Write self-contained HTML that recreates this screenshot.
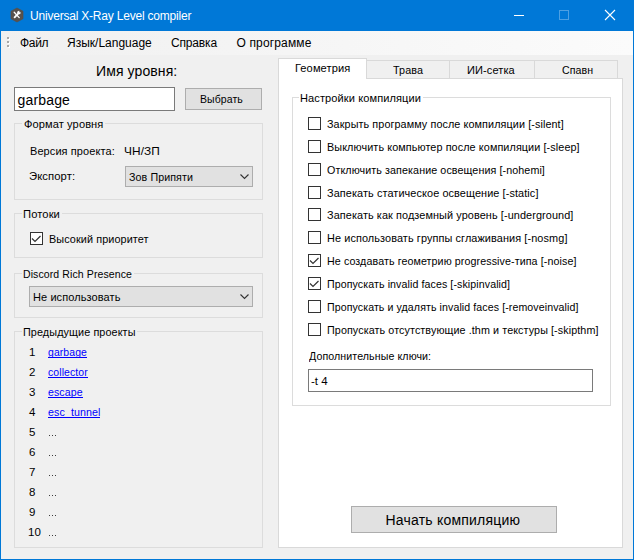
<!DOCTYPE html><html><head><meta charset='utf-8'><style>
html,body{margin:0;padding:0;width:634px;height:560px;overflow:hidden;background:#F0F0F0;}
.a{position:absolute;} .t{position:absolute;font-family:"Liberation Sans", sans-serif;line-height:20px;white-space:pre;}
</style></head><body>
<div class='a' style='left:0px;top:0px;width:634px;height:31px;z-index:1;background:#0078D7;'></div>
<div class='a' style='left:0px;top:31px;width:1px;height:529px;z-index:50;background:#0078D7;'></div>
<div class='a' style='left:633px;top:31px;width:1px;height:529px;z-index:50;background:#0078D7;'></div>
<div class='a' style='left:0px;top:559px;width:634px;height:1px;z-index:50;background:#0078D7;'></div>
<svg class='a' style='left:0px;top:0px;z-index:3' width='30' height='30' viewBox='0 0 30 30'>
<polygon points='17,8 23,11.2 23,18.8 17,22 11,18.8 11,11.2' fill='#57524E' stroke='#5F4B3D' stroke-width='0.6'/>
<path d='M14.2,12.3 L19.2,17.6' stroke='#fff' stroke-width='1.3' stroke-linecap='round'/>
<path d='M14.6,17.4 L18.6,13.2' stroke='#fff' stroke-width='1.8' stroke-linecap='round'/>
<circle cx='19' cy='12.6' r='1.8' fill='#fff'/>
<circle cx='20.3' cy='11.4' r='1' fill='#57524E'/>
</svg>
<div class='a' style='left:514px;top:15px;width:10px;height:1px;z-index:3;background:#fff;'></div>
<div class='a' style='left:559px;top:10px;width:10px;height:10px;z-index:3;box-sizing:border-box;border:1px solid rgba(255,255,255,0.3);'></div>
<svg class='a' style='left:604px;top:9px;z-index:3' width='12' height='12' viewBox='0 0 12 12'>
<path d='M1,1 L11,11 M11,1 L1,11' stroke='#fff' stroke-width='1.1'/></svg>
<div class='a' style='left:1px;top:31px;width:632px;height:24px;z-index:1;background:linear-gradient(to right,#F0F0F0,#FBFBFB);'></div>
<div class='a' style='left:8px;top:38px;width:2px;height:2px;z-index:2;background:#fff;'></div>
<div class='a' style='left:7px;top:37px;width:2px;height:2px;z-index:3;background:#A8A8A8;'></div>
<div class='a' style='left:8px;top:42px;width:2px;height:2px;z-index:2;background:#fff;'></div>
<div class='a' style='left:7px;top:41px;width:2px;height:2px;z-index:3;background:#A8A8A8;'></div>
<div class='a' style='left:8px;top:46px;width:2px;height:2px;z-index:2;background:#fff;'></div>
<div class='a' style='left:7px;top:45px;width:2px;height:2px;z-index:3;background:#A8A8A8;'></div>
<div class='a' style='left:14px;top:87px;width:161px;height:24px;z-index:1;background:#fff;box-sizing:border-box;border:1px solid #7A7A7A;'></div>
<div class='a' style='left:185px;top:88px;width:77px;height:22px;z-index:1;background:#E1E1E1;box-sizing:border-box;border:1px solid #ADADAD;'></div>
<div class='a' style='left:14px;top:123px;width:249px;height:77px;z-index:1;box-sizing:border-box;border:1px solid #DCDCDC;'></div>
<div class='a' style='left:22px;top:122px;width:83px;height:3px;z-index:2;background:#F0F0F0;'></div>
<div class='a' style='left:125px;top:166px;width:128px;height:21px;z-index:1;background:#E1E1E1;box-sizing:border-box;border:1px solid #ADADAD;'></div>
<svg class='a' style='left:240px;top:174px;z-index:3' width='10' height='6' viewBox='0 0 10 6'>
<path d='M0.5,0.5 L4.5,4.5 L8.5,0.5' fill='none' stroke='#333' stroke-width='1.1'/></svg>
<div class='a' style='left:14px;top:213px;width:249px;height:45px;z-index:1;box-sizing:border-box;border:1px solid #DCDCDC;'></div>
<div class='a' style='left:22px;top:212px;width:40px;height:3px;z-index:2;background:#F0F0F0;'></div>
<div class='a' style='left:30px;top:232px;width:13px;height:13px;z-index:3;background:#fff;box-sizing:border-box;border:1px solid #333;'></div>
<svg class='a' style='left:30px;top:232px;z-index:4' width='13' height='13' viewBox='0 0 13 13'>
<path d='M2,6.5 L5,9.5 L10.5,4' fill='none' stroke='#333' stroke-width='1.2'/></svg>
<div class='a' style='left:14px;top:273px;width:249px;height:45px;z-index:1;box-sizing:border-box;border:1px solid #DCDCDC;'></div>
<div class='a' style='left:22px;top:272px;width:112px;height:3px;z-index:2;background:#F0F0F0;'></div>
<div class='a' style='left:29px;top:286px;width:224px;height:21px;z-index:1;background:#E1E1E1;box-sizing:border-box;border:1px solid #ADADAD;'></div>
<svg class='a' style='left:240px;top:294px;z-index:3' width='10' height='6' viewBox='0 0 10 6'>
<path d='M0.5,0.5 L4.5,4.5 L8.5,0.5' fill='none' stroke='#333' stroke-width='1.1'/></svg>
<div class='a' style='left:14px;top:331px;width:249px;height:217px;z-index:1;box-sizing:border-box;border:1px solid #DCDCDC;'></div>
<div class='a' style='left:22px;top:330px;width:115px;height:3px;z-index:2;background:#F0F0F0;'></div>
<div class='a' style='left:48px;top:357px;width:39px;height:1px;z-index:6;background:#0000FF;'></div>
<div class='a' style='left:48px;top:377px;width:40px;height:1px;z-index:6;background:#0000FF;'></div>
<div class='a' style='left:48px;top:397px;width:35px;height:1px;z-index:6;background:#0000FF;'></div>
<div class='a' style='left:48px;top:417px;width:52px;height:1px;z-index:6;background:#0000FF;'></div>
<div class='a' style='left:49px;top:435px;width:1px;height:1px;z-index:6;background:#3C3C3C;'></div>
<div class='a' style='left:52px;top:435px;width:1px;height:1px;z-index:6;background:#3C3C3C;'></div>
<div class='a' style='left:55px;top:435px;width:1px;height:1px;z-index:6;background:#3C3C3C;'></div>
<div class='a' style='left:49px;top:455px;width:1px;height:1px;z-index:6;background:#3C3C3C;'></div>
<div class='a' style='left:52px;top:455px;width:1px;height:1px;z-index:6;background:#3C3C3C;'></div>
<div class='a' style='left:55px;top:455px;width:1px;height:1px;z-index:6;background:#3C3C3C;'></div>
<div class='a' style='left:49px;top:475px;width:1px;height:1px;z-index:6;background:#3C3C3C;'></div>
<div class='a' style='left:52px;top:475px;width:1px;height:1px;z-index:6;background:#3C3C3C;'></div>
<div class='a' style='left:55px;top:475px;width:1px;height:1px;z-index:6;background:#3C3C3C;'></div>
<div class='a' style='left:49px;top:495px;width:1px;height:1px;z-index:6;background:#3C3C3C;'></div>
<div class='a' style='left:52px;top:495px;width:1px;height:1px;z-index:6;background:#3C3C3C;'></div>
<div class='a' style='left:55px;top:495px;width:1px;height:1px;z-index:6;background:#3C3C3C;'></div>
<div class='a' style='left:49px;top:515px;width:1px;height:1px;z-index:6;background:#3C3C3C;'></div>
<div class='a' style='left:52px;top:515px;width:1px;height:1px;z-index:6;background:#3C3C3C;'></div>
<div class='a' style='left:55px;top:515px;width:1px;height:1px;z-index:6;background:#3C3C3C;'></div>
<div class='a' style='left:49px;top:535px;width:1px;height:1px;z-index:6;background:#3C3C3C;'></div>
<div class='a' style='left:52px;top:535px;width:1px;height:1px;z-index:6;background:#3C3C3C;'></div>
<div class='a' style='left:55px;top:535px;width:1px;height:1px;z-index:6;background:#3C3C3C;'></div>
<div class='a' style='left:278px;top:78px;width:345px;height:470px;z-index:1;background:#fff;box-sizing:border-box;border:1px solid #D9D9D9;'></div>
<div class='a' style='left:366px;top:60px;width:84px;height:19px;z-index:2;background:#F0F0F0;box-sizing:border-box;border:1px solid #D9D9D9;'></div>
<div class='a' style='left:449px;top:60px;width:86px;height:19px;z-index:2;background:#F0F0F0;box-sizing:border-box;border:1px solid #D9D9D9;'></div>
<div class='a' style='left:534px;top:60px;width:84px;height:19px;z-index:2;background:#F0F0F0;box-sizing:border-box;border:1px solid #D9D9D9;'></div>
<div class='a' style='left:278px;top:58px;width:89px;height:21px;z-index:3;background:#fff;box-sizing:border-box;border:1px solid #D9D9D9;border-bottom:none;'></div>
<div class='a' style='left:292px;top:97px;width:319px;height:309px;z-index:1;box-sizing:border-box;border:1px solid #DCDCDC;'></div>
<div class='a' style='left:299px;top:96px;width:124px;height:3px;z-index:2;background:#fff;'></div>
<div class='a' style='left:308px;top:117px;width:13px;height:13px;z-index:3;background:#fff;box-sizing:border-box;border:1px solid #333;'></div>
<div class='a' style='left:308px;top:140px;width:13px;height:13px;z-index:3;background:#fff;box-sizing:border-box;border:1px solid #333;'></div>
<div class='a' style='left:308px;top:163px;width:13px;height:13px;z-index:3;background:#fff;box-sizing:border-box;border:1px solid #333;'></div>
<div class='a' style='left:308px;top:186px;width:13px;height:13px;z-index:3;background:#fff;box-sizing:border-box;border:1px solid #333;'></div>
<div class='a' style='left:308px;top:208px;width:13px;height:13px;z-index:3;background:#fff;box-sizing:border-box;border:1px solid #333;'></div>
<div class='a' style='left:308px;top:231px;width:13px;height:13px;z-index:3;background:#fff;box-sizing:border-box;border:1px solid #333;'></div>
<div class='a' style='left:308px;top:254px;width:13px;height:13px;z-index:3;background:#fff;box-sizing:border-box;border:1px solid #333;'></div>
<svg class='a' style='left:308px;top:254px;z-index:4' width='13' height='13' viewBox='0 0 13 13'>
<path d='M2,6.5 L5,9.5 L10.5,4' fill='none' stroke='#333' stroke-width='1.2'/></svg>
<div class='a' style='left:308px;top:277px;width:13px;height:13px;z-index:3;background:#fff;box-sizing:border-box;border:1px solid #333;'></div>
<svg class='a' style='left:308px;top:277px;z-index:4' width='13' height='13' viewBox='0 0 13 13'>
<path d='M2,6.5 L5,9.5 L10.5,4' fill='none' stroke='#333' stroke-width='1.2'/></svg>
<div class='a' style='left:308px;top:300px;width:13px;height:13px;z-index:3;background:#fff;box-sizing:border-box;border:1px solid #333;'></div>
<div class='a' style='left:308px;top:323px;width:13px;height:13px;z-index:3;background:#fff;box-sizing:border-box;border:1px solid #333;'></div>
<div class='a' style='left:308px;top:369px;width:285px;height:23px;z-index:1;background:#fff;box-sizing:border-box;border:1px solid #7A7A7A;'></div>
<div class='a' style='left:351px;top:506px;width:206px;height:27px;z-index:1;background:#E1E1E1;box-sizing:border-box;border:1px solid #ADADAD;'></div>
<div class='t' style='left:30.00px;top:6px;font-size:12px;color:#fff;z-index:5;letter-spacing:-0.207px;'>Universal X-Ray Level compiler</div>
<div class='t' style='left:20.00px;top:33px;font-size:12px;color:#000;z-index:5;letter-spacing:-0.333px;'>Файл</div>
<div class='t' style='left:67.00px;top:33px;font-size:12px;color:#000;z-index:5;'>Язык/Language</div>
<div class='t' style='left:171.00px;top:33px;font-size:12px;color:#000;z-index:5;letter-spacing:-0.167px;'>Справка</div>
<div class='t' style='left:236.50px;top:33px;font-size:12px;color:#000;z-index:5;letter-spacing:0.150px;'>О программе</div>
<div class='t' style='left:96.00px;top:61px;font-size:14px;color:#000;z-index:5;letter-spacing:0.100px;'>Имя уровня:</div>
<div class='t' style='left:17.50px;top:90px;font-size:14px;color:#000;z-index:5;letter-spacing:0.167px;'>garbage</div>
<div class='t' style='left:199.59px;top:89px;font-size:11.5px;color:#000;z-index:5;letter-spacing:0.100px;transform:scaleX(0.9130);transform-origin:0 0;'>Выбрать</div>
<div class='t' style='left:24.00px;top:114px;font-size:11.5px;color:#000;z-index:5;letter-spacing:0.100px;transform:scaleX(0.9634);transform-origin:0 0;'>Формат уровня</div>
<div class='t' style='left:29.55px;top:141px;font-size:11.5px;color:#000;z-index:5;letter-spacing:0.100px;transform:scaleX(0.9540);transform-origin:0 0;'>Версия проекта:</div>
<div class='t' style='left:124.47px;top:141px;font-size:11.5px;color:#000;z-index:5;letter-spacing:0.100px;transform:scaleX(1.0303);transform-origin:0 0;'>ЧН/ЗП</div>
<div class='t' style='left:29.02px;top:166px;font-size:11.5px;color:#000;z-index:5;letter-spacing:0.100px;transform:scaleX(0.9783);transform-origin:0 0;'>Экспорт:</div>
<div class='t' style='left:129.00px;top:167px;font-size:11.5px;color:#000;z-index:5;letter-spacing:0.100px;transform:scaleX(0.9275);transform-origin:0 0;'>Зов Припяти</div>
<div class='t' style='left:23.03px;top:204px;font-size:11.5px;color:#000;z-index:5;letter-spacing:0.100px;transform:scaleX(0.9730);transform-origin:0 0;'>Потоки</div>
<div class='t' style='left:49.06px;top:229px;font-size:11.5px;color:#000;z-index:5;letter-spacing:0.100px;transform:scaleX(0.9429);transform-origin:0 0;'>Высокий приоритет</div>
<div class='t' style='left:23.08px;top:264px;font-size:11.5px;color:#000;z-index:5;letter-spacing:0.100px;transform:scaleX(0.9153);transform-origin:0 0;'>Discord Rich Presence</div>
<div class='t' style='left:33.04px;top:287px;font-size:11.5px;color:#000;z-index:5;letter-spacing:0.100px;transform:scaleX(0.9556);transform-origin:0 0;'>Не использовать</div>
<div class='t' style='left:23.06px;top:322px;font-size:11.5px;color:#000;z-index:5;letter-spacing:0.100px;transform:scaleX(0.9407);transform-origin:0 0;'>Предыдущие проекты</div>
<div class='t' style='left:29.00px;top:342px;font-size:11.5px;color:#000;z-index:5;'>1</div>
<div class='t' style='left:48.00px;top:342px;font-size:11.5px;color:#0000FF;z-index:5;letter-spacing:0.100px;transform:scaleX(0.9070);transform-origin:0 0;'>garbage</div>
<div class='t' style='left:29.00px;top:362px;font-size:11.5px;color:#000;z-index:5;'>2</div>
<div class='t' style='left:48.00px;top:362px;font-size:11.5px;color:#0000FF;z-index:5;letter-spacing:0.100px;transform:scaleX(0.9091);transform-origin:0 0;'>collector</div>
<div class='t' style='left:29.00px;top:382px;font-size:11.5px;color:#000;z-index:5;'>3</div>
<div class='t' style='left:48.00px;top:382px;font-size:11.5px;color:#0000FF;z-index:5;letter-spacing:0.100px;transform:scaleX(0.9211);transform-origin:0 0;'>escape</div>
<div class='t' style='left:29.00px;top:402px;font-size:11.5px;color:#000;z-index:5;'>4</div>
<div class='t' style='left:48.00px;top:402px;font-size:11.5px;color:#0000FF;z-index:5;letter-spacing:0.100px;transform:scaleX(0.9286);transform-origin:0 0;'>esc_tunnel</div>
<div class='t' style='left:29.00px;top:422px;font-size:11.5px;color:#000;z-index:5;'>5</div>
<div class='t' style='left:29.00px;top:442px;font-size:11.5px;color:#000;z-index:5;'>6</div>
<div class='t' style='left:29.00px;top:462px;font-size:11.5px;color:#000;z-index:5;'>7</div>
<div class='t' style='left:29.00px;top:482px;font-size:11.5px;color:#000;z-index:5;'>8</div>
<div class='t' style='left:29.00px;top:502px;font-size:11.5px;color:#000;z-index:5;'>9</div>
<div class='t' style='left:28.00px;top:522px;font-size:11.5px;color:#000;z-index:5;letter-spacing:0.100px;transform:scaleX(1.0000);transform-origin:0 0;'>10</div>
<div class='t' style='left:295.04px;top:58px;font-size:11.5px;color:#000;z-index:6;letter-spacing:0.100px;transform:scaleX(0.9643);transform-origin:0 0;'>Геометрия</div>
<div class='t' style='left:392.50px;top:60px;font-size:11.5px;color:#000;z-index:6;letter-spacing:0.100px;transform:scaleX(0.9375);transform-origin:0 0;'>Трава</div>
<div class='t' style='left:467.04px;top:60px;font-size:11.5px;color:#000;z-index:6;letter-spacing:0.100px;transform:scaleX(0.9592);transform-origin:0 0;'>ИИ-сетка</div>
<div class='t' style='left:561.50px;top:60px;font-size:11.5px;color:#000;z-index:6;letter-spacing:0.100px;transform:scaleX(0.9242);transform-origin:0 0;'>Спавн</div>
<div class='t' style='left:300.04px;top:88px;font-size:11.5px;color:#000;z-index:5;letter-spacing:0.100px;transform:scaleX(0.9600);transform-origin:0 0;'>Настройки компиляции</div>
<div class='t' style='left:327.00px;top:114px;font-size:11.5px;color:#000;z-index:5;letter-spacing:0.100px;transform:scaleX(0.9389);transform-origin:0 0;'>Закрыть программу после компиляции [-silent]</div>
<div class='t' style='left:327.06px;top:137px;font-size:11.5px;color:#000;z-index:5;letter-spacing:0.100px;transform:scaleX(0.9401);transform-origin:0 0;'>Выключить компьютер после компиляции [-sleep]</div>
<div class='t' style='left:327.00px;top:160px;font-size:11.5px;color:#000;z-index:5;letter-spacing:0.100px;transform:scaleX(0.9316);transform-origin:0 0;'>Отключить запекание освещения [-nohemi]</div>
<div class='t' style='left:327.00px;top:183px;font-size:11.5px;color:#000;z-index:5;letter-spacing:0.100px;transform:scaleX(0.9462);transform-origin:0 0;'>Запекать статическое освещение [-static]</div>
<div class='t' style='left:327.00px;top:205px;font-size:11.5px;color:#000;z-index:5;letter-spacing:0.100px;transform:scaleX(0.9450);transform-origin:0 0;'>Запекать как подземный уровень [-underground]</div>
<div class='t' style='left:327.05px;top:228px;font-size:11.5px;color:#000;z-index:5;letter-spacing:0.100px;transform:scaleX(0.9472);transform-origin:0 0;'>Не использовать группы сглаживания [-nosmg]</div>
<div class='t' style='left:327.07px;top:251px;font-size:11.5px;color:#000;z-index:5;letter-spacing:0.100px;transform:scaleX(0.9288);transform-origin:0 0;'>Не создавать геометрию progressive-типа [-noise]</div>
<div class='t' style='left:327.08px;top:274px;font-size:11.5px;color:#000;z-index:5;letter-spacing:0.100px;transform:scaleX(0.9239);transform-origin:0 0;'>Пропускать invalid faces [-skipinvalid]</div>
<div class='t' style='left:327.08px;top:297px;font-size:11.5px;color:#000;z-index:5;letter-spacing:0.100px;transform:scaleX(0.9218);transform-origin:0 0;'>Пропускать и удалять invalid faces [-removeinvalid]</div>
<div class='t' style='left:327.07px;top:320px;font-size:11.5px;color:#000;z-index:5;letter-spacing:0.100px;transform:scaleX(0.9343);transform-origin:0 0;'>Пропускать отсутствующие .thm и текстуры [-skipthm]</div>
<div class='t' style='left:308.50px;top:346px;font-size:11.5px;color:#000;z-index:5;letter-spacing:0.100px;transform:scaleX(0.9242);transform-origin:0 0;'>Дополнительные ключи:</div>
<div class='t' style='left:311.00px;top:371px;font-size:11.5px;color:#000;z-index:5;'>-t 4</div>
<div class='t' style='left:385.50px;top:510px;font-size:14px;color:#000;z-index:5;letter-spacing:0.213px;'>Начать компиляцию</div>
</body></html>
